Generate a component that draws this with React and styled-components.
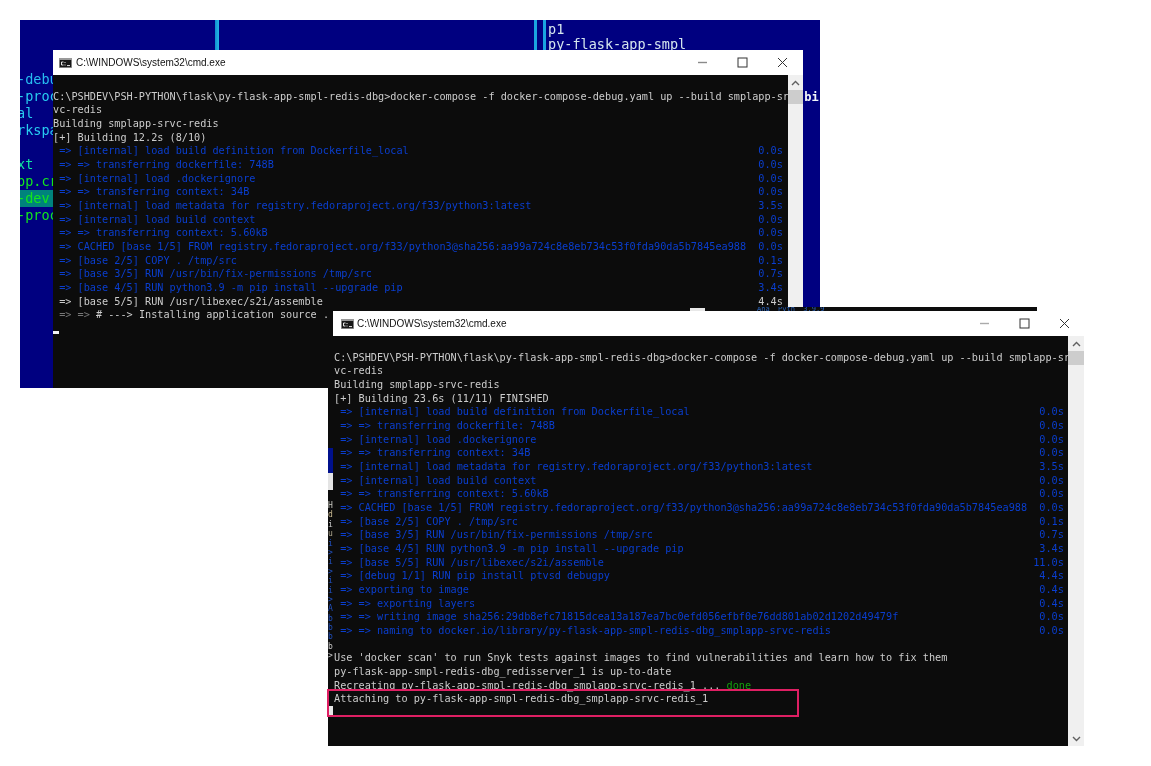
import React from 'react';
import styled, { createGlobalStyle } from 'styled-components';

const Global = createGlobalStyle`
  html, body { margin: 0; padding: 0; background: #fff; }
`;

const MONO = `"DejaVu Sans Mono", "Liberation Mono", monospace`;
const BLUE = '#0a3ecf';
const GREY = '#cccccc';

const Desktop = styled.div`
  position: relative;
  width: 1151px;
  height: 766px;
  overflow: hidden;
  background: #fff;
  filter: blur(0.35px);
`;

/* Blue editor behind the windows */
const Editor = styled.div`
  position: absolute;
  left: 20px;
  top: 20px;
  width: 800px;
  height: 368px;
  display: flex;
  overflow: hidden;
  background: #000080;
  font: 13.5px/17.1px ${MONO};
`;
const LeftPane = styled.div`
  width: 195px;
  padding-top: 50.5px;
  overflow: hidden;
`;
const MiddlePane = styled.div`
  flex: 1;
`;
const RightPane = styled.div`
  width: 272px;
  padding-top: 0.5px;
  overflow: hidden;
  color: #d5e6ee;
`;
const Divider = styled.div`
  width: 4px;
  height: 100%;
  background: linear-gradient(90deg, #0f8fd0, #25b8e8);
`;
const DoubleDivider = styled.div`
  width: 12px;
  height: 100%;
  border-left: 3px solid #1aa5e0;
  border-right: 3px solid #1aa5e0;
  box-sizing: border-box;
  margin-right: 2px;
`;
const FileRow = styled.div`
  height: 17.1px;
  white-space: pre;
  text-indent: ${p => (p.$flush ? '-3px' : '0')};
  margin-top: ${p => (p.$tight ? '-2px' : '0')};
  color: ${p => p.$color};
  background: ${p => (p.$active ? '#00837c' : 'transparent')};
`;
const PeekRow = styled.div`
  height: 17.1px;
  margin-top: 2px;
  margin-right: -6px;
  text-align: right;
  font-size: 12px;
  font-weight: 600;
  white-space: pre;
  color: #f0f4f8;
`;

/* Dark window hiding directly behind the front window */
const HiddenWindow = styled.div`
  position: absolute;
  left: 328px;
  top: 307px;
  width: 709px;
  height: 439px;
  background: #0c0c0c;
  z-index: 2;
`;
const HiddenTop = styled.div`
  height: 4px;
  display: flex;
  align-items: flex-start;
  padding-left: 362px;
  gap: 52px;
  overflow: hidden;
`;
const HiddenThumb = styled.div`
  width: 15px;
  height: 3px;
  margin-top: 1px;
  background: #e8e8e8;
`;
const HiddenCaption = styled.div`
  font: 7px/3px ${MONO};
  color: #2a62b8;
  white-space: pre;
  margin-top: 1px;
`;
const HiddenSide = styled.div`
  width: 5px;
  display: flex;
  flex-direction: column;
  overflow: hidden;
`;
const SideBlock = styled.div`
  flex: none;
  height: ${p => p.$h}px;
  margin-top: ${p => p.$mt || 0}px;
  background: ${p => p.$bg};
`;
const SideGlyphs = styled.div`
  padding-top: 11px;
  font: 8px/9.4px ${MONO};
`;
const SideGlyph = styled.div`
  height: 9.4px;
  color: ${p => p.$color};
`;

/* cmd.exe window */
const CmdWindow = styled.section`
  position: absolute;
  left: ${p => p.$left}px;
  top: ${p => p.$top}px;
  width: ${p => p.$width}px;
  height: ${p => p.$height}px;
  z-index: ${p => p.$z};
  display: flex;
  flex-direction: column;
  background: #0c0c0c;
`;
const TitleBar = styled.header`
  flex: none;
  height: 25px;
  display: flex;
  align-items: center;
  background: #fff;
  padding-left: ${p => p.$pad}px;
`;
const Title = styled.span`
  margin-left: ${p => p.$gap}px;
  font: 10px "Liberation Sans", Arial, sans-serif;
  color: #111;
  white-space: pre;
  flex: 1;
`;
const WinControls = styled.div`
  display: flex;
  align-items: center;
  margin-right: ${p => p.$mr}px;
`;
const CtlBtn = styled.span`
  width: 40px;
  height: 25px;
  display: flex;
  align-items: center;
  justify-content: center;
`;
const TermBody = styled.div`
  flex: 1;
  min-height: 0;
  display: flex;
`;
const Console = styled.div`
  flex: 1;
  min-width: 0;
  overflow: hidden;
  padding-top: 14.6px;
  padding-left: ${p => p.$pad}px;
  font: 10.2px/13.68px ${MONO};
  color: ${GREY};
`;
const Line = styled.div`
  height: 13.68px;
  white-space: pre;
  color: ${p => p.$color || GREY};
`;
const StepLine = styled.div`
  width: 119ch;
  height: 13.68px;
  padding-left: 1ch;
  box-sizing: border-box;
  display: flex;
  justify-content: space-between;
  white-space: pre;
  color: ${p => (p.$active ? GREY : BLUE)};
`;
const Dim = styled.span`
  color: #777;
`;
const Done = styled.span`
  color: #13a10e;
`;
const Cursor = styled.div`
  width: 6px;
  height: 3px;
  margin-top: 9px;
  background: #f2f2f2;
`;
const Scrollbar = styled.div`
  flex: none;
  width: ${p => p.$width}px;
  background: #f0f0f0;
  display: flex;
  flex-direction: column;
  align-items: center;
`;
const ArrowSlot = styled.div`
  flex: none;
  height: 15px;
  width: 100%;
  display: flex;
  align-items: center;
  justify-content: center;
`;
const Thumb = styled.div`
  flex: none;
  height: 14px;
  width: 100%;
  background: #cdcdcd;
`;
const Track = styled.div`
  flex: 1;
`;

/* Annotation */
const Callout = styled.div`
  position: absolute;
  left: 327px;
  top: 689px;
  width: 468px;
  height: 24px;
  border: 2px solid #df1f63;
  z-index: 5;
`;

const CmdIcon = () => (
  <svg width="13" height="10" viewBox="0 0 13 10">
    <rect width="13" height="10" fill="#9a9a9a" />
    <rect x="0.8" y="2" width="11.4" height="7.2" fill="#161616" />
    <path d="M2.5 4h2M2.5 4v3h2M6 4v1M6 6.5v1M8 7.6h3" stroke="#e6e6e6" strokeWidth="1" fill="none" />
  </svg>
);
const MinIcon = ({ color }) => (
  <svg width="11" height="11" viewBox="0 0 11 11">
    <path d="M1 5.5h9" stroke={color} strokeWidth="1.4" />
  </svg>
);
const MaxIcon = () => (
  <svg width="11" height="11" viewBox="0 0 11 11">
    <rect x="1" y="1" width="9" height="9" fill="none" stroke="#333" strokeWidth="1" />
  </svg>
);
const CloseIcon = () => (
  <svg width="11" height="11" viewBox="0 0 11 11">
    <path d="M1 1l9 9M10 1l-9 9" stroke="#333" strokeWidth="1" />
  </svg>
);
const Chevron = ({ down }) => (
  <svg width="9" height="6" viewBox="0 0 9 6">
    <path d={down ? 'M1 1l3.5 3.5L8 1' : 'M1 5l3.5-3.5L8 5'} stroke="#606060" strokeWidth="1.4" fill="none" />
  </svg>
);

const leftFiles = [
  ['-debug', '#27bdf0'], ['-proc', '#27cdf0'], ['al', '#27cdf0'], ['rkspace', '#27cdf0'], ['', '#fff'],
  ['xt', '#10e8a0'], ['pp.cr', '#12e81c'], ['-dev', '#12e81c', true], ['-proc', '#12e81c'],
];

const sideGlyphs = [
  ['H', '#c8c8c0'], ['d', '#c8b890'], ['i', '#c8c8c8'], ['u', '#b0a890'], ['i', '#2050c0'], ['>', '#2050c0'],
  ['i', '#2050c0'], ['>', '#2050c0'], ['i', '#2050c0'], ['i', '#2050c0'], ['>', '#2050c0'], ['A', '#2050c0'],
  ['b', '#2050c0'], ['b', '#2050c0'], ['b', '#2050c0'], ['b', '#c8c8c8'], ['>', '#c8c8c8'],
];

const cmd = 'C:\\PSHDEV\\PSH-PYTHON\\flask\\py-flask-app-smpl-redis-dbg>docker-compose -f docker-compose-debug.yaml up --build smplapp-sr';
const cached = '=> CACHED [base 1/5] FROM registry.fedoraproject.org/f33/python3@sha256:aa99a724c8e8eb734c53f0fda90da5b7845ea988';

const backSteps = [
  ['=> [internal] load build definition from Dockerfile_local', '0.0s'],
  ['=> => transferring dockerfile: 748B', '0.0s'],
  ['=> [internal] load .dockerignore', '0.0s'],
  ['=> => transferring context: 34B', '0.0s'],
  ['=> [internal] load metadata for registry.fedoraproject.org/f33/python3:latest', '3.5s'],
  ['=> [internal] load build context', '0.0s'],
  ['=> => transferring context: 5.60kB', '0.0s'],
  [cached, '0.0s'],
  ['=> [base 2/5] COPY . /tmp/src', '0.1s'],
  ['=> [base 3/5] RUN /usr/bin/fix-permissions /tmp/src', '0.7s'],
  ['=> [base 4/5] RUN python3.9 -m pip install --upgrade pip', '3.4s'],
  ['=> [base 5/5] RUN /usr/libexec/s2i/assemble', '4.4s', true],
];

const frontSteps = [
  ...backSteps.slice(0, 11),
  ['=> [base 5/5] RUN /usr/libexec/s2i/assemble', '11.0s'],
  ['=> [debug 1/1] RUN pip install ptvsd debugpy', '4.4s'],
  ['=> exporting to image', '0.4s'],
  ['=> => exporting layers', '0.4s'],
  ['=> => writing image sha256:29db8efc71815dcea13a187ea7bc0efd056efbf0e76dd801ab02d1202d49479f', '0.0s'],
  ['=> => naming to docker.io/library/py-flask-app-smpl-redis-dbg_smplapp-srvc-redis', '0.0s'],
];

const Steps = ({ items }) =>
  items.map(([label, time, active], i) => (
    <StepLine key={i} $active={active}>
      <span>{label}</span>
      <span>{time}</span>
    </StepLine>
  ));

const Window = ({ left, top, width, height, z, barWidth, ctlMargin, minColor, iconPad, titleGap, textPad, children }) => (
  <CmdWindow $left={left} $top={top} $width={width} $height={height} $z={z}>
    <TitleBar $pad={iconPad}>
      <CmdIcon />
      <Title $gap={titleGap}>C:\WINDOWS\system32\cmd.exe</Title>
      <WinControls $mr={ctlMargin}>
        <CtlBtn><MinIcon color={minColor} /></CtlBtn>
        <CtlBtn><MaxIcon /></CtlBtn>
        <CtlBtn><CloseIcon /></CtlBtn>
      </WinControls>
    </TitleBar>
    <TermBody>
      <Console $pad={textPad}>{children}</Console>
      <Scrollbar $width={barWidth}>
        <ArrowSlot><Chevron /></ArrowSlot>
        <Thumb />
        <Track />
        <ArrowSlot><Chevron down /></ArrowSlot>
      </Scrollbar>
    </TermBody>
  </CmdWindow>
);

export default function App() {
  return (
    <Desktop>
      <Global />
      <Editor>
        <LeftPane>
          {leftFiles.map(([name, color, active], i) => (
            <FileRow key={i} $color={color} $active={active} $flush>{name}</FileRow>
          ))}
        </LeftPane>
        <Divider />
        <MiddlePane />
        <DoubleDivider />
        <RightPane>
          <FileRow $color="#d5e6ee">p1</FileRow>
          <FileRow $color="#d5e6ee" $tight>py-flask-app-smpl</FileRow>
          <FileRow />
          <FileRow />
          <PeekRow>bi:</PeekRow>
        </RightPane>
      </Editor>

      <Window left={53} top={50} width={750} height={338} z={1} barWidth={15} ctlMargin={1} minColor="#8a8a8a" iconPad={6} titleGap={4} textPad={0}>
        <Line>{cmd}</Line>
        <Line>vc-redis</Line>
        <Line>Building smplapp-srvc-redis</Line>
        <Line>[+] Building 12.2s (8/10)</Line>
        <Steps items={backSteps} />
        <Line> <Dim>=&gt; =&gt;</Dim> # ---&gt; Installing application source ...</Line>
        <Cursor />
      </Window>

      <HiddenWindow>
        <HiddenTop>
          <HiddenThumb />
          <HiddenCaption>Ana  Pyth  3.9.9</HiddenCaption>
        </HiddenTop>
        <HiddenSide>
          <SideBlock $h={137} $bg="#0c0c0c" />
          <SideBlock $h={25} $bg="#00108c" />
          <SideBlock $h={17} $bg="#e4e4e4" />
          <SideGlyphs>
            {sideGlyphs.map(([g, color], i) => (
              <SideGlyph key={i} $color={color}>{g}</SideGlyph>
            ))}
          </SideGlyphs>
          <SideBlock $h={10} $mt={45} $bg="#e8e8e8" />
        </HiddenSide>
      </HiddenWindow>

      <Window left={333} top={311} width={751} height={435} z={3} barWidth={16} ctlMargin={0} minColor="#aaaaaa" iconPad={8} titleGap={3} textPad={1}>
        <Line>{cmd}</Line>
        <Line>vc-redis</Line>
        <Line>Building smplapp-srvc-redis</Line>
        <Line>[+] Building 23.6s (11/11) FINISHED</Line>
        <Steps items={frontSteps} />
        <Line />
        <Line>Use 'docker scan' to run Snyk tests against images to find vulnerabilities and learn how to fix them</Line>
        <Line>py-flask-app-smpl-redis-dbg_redisserver_1 is up-to-date</Line>
        <Line>Recreating py-flask-app-smpl-redis-dbg_smplapp-srvc-redis_1 ... <Done>done</Done></Line>
        <Line>Attaching to py-flask-app-smpl-redis-dbg_smplapp-srvc-redis_1</Line>
      </Window>

      <Callout />
    </Desktop>
  );
}
